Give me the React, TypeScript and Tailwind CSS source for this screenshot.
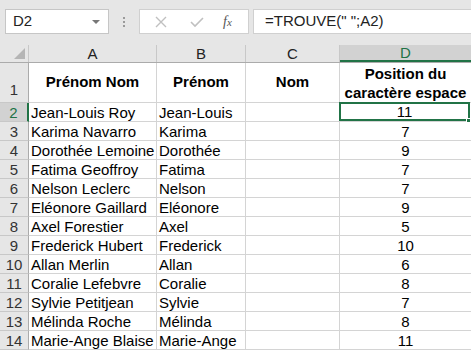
import React from 'react';

const rows: [string, string, number][] = [
  ['Jean-Louis Roy', 'Jean-Louis', 11],
  ['Karima Navarro', 'Karima', 7],
  ['Dorothée Lemoine', 'Dorothée', 9],
  ['Fatima Geoffroy', 'Fatima', 7],
  ['Nelson Leclerc', 'Nelson', 7],
  ['Eléonore Gaillard', 'Eléonore', 9],
  ['Axel Forestier', 'Axel', 5],
  ['Frederick Hubert', 'Frederick', 10],
  ['Allan Merlin', 'Allan', 6],
  ['Coralie Lefebvre', 'Coralie', 8],
  ['Sylvie Petitjean', 'Sylvie', 7],
  ['Mélinda Roche', 'Mélinda', 8],
  ['Marie-Ange Blaise', 'Marie-Ange', 11],
];

const cols = 'grid grid-cols-[29px_128px_89px_94px_131px]';
const cell = 'border-r border-b border-[#d4d4d4] h-[19px] leading-[19px] text-[15px] overflow-hidden whitespace-nowrap';

export default function App() {
  return (
    <div className="w-[471px] h-[351px] overflow-hidden bg-white text-black" style={{ fontFamily: '"Liberation Sans", Arial, sans-serif' }}>
      {/* formula bar */}
      <div className="h-[45px] bg-[#e6e6e6] flex items-start pt-[9px] pl-[5px]">
        <div className="w-[104px] h-[25px] bg-white border border-[#c6c6c6] flex items-center justify-between pl-[7px] pr-[8px]">
          <span className="text-[15px] text-[#222]">D2</span>
          <span className="w-0 h-0 border-l-[4px] border-r-[4px] border-t-[4px] border-l-transparent border-r-transparent border-t-[#777]" />
        </div>
        <div className="w-[30px] h-[25px] flex flex-col items-center justify-center gap-[2px]">
          <span className="w-[2px] h-[2px] bg-[#9a9a9a]" />
          <span className="w-[2px] h-[2px] bg-[#9a9a9a]" />
          <span className="w-[2px] h-[2px] bg-[#9a9a9a]" />
        </div>
        <div className="w-[110px] h-[25px] bg-white border border-[#d0d0d0] flex items-center">
          <svg width="12" height="12" viewBox="0 0 12 12" className="ml-[15px]">
            <path d="M1 1 L11 11 M11 1 L1 11" stroke="#c0c0c0" strokeWidth="1.4" fill="none" />
          </svg>
          <svg width="14" height="12" viewBox="0 0 14 12" className="ml-[23px]">
            <path d="M1 6 L5 10 L13 2" stroke="#c0c0c0" strokeWidth="1.6" fill="none" />
          </svg>
          <span className="ml-[19px] text-[14px] italic text-[#555]" style={{ fontFamily: '"Liberation Serif", serif' }}>f<span className="text-[11px]">x</span></span>
        </div>
        <div className="ml-[4px] flex-1 h-[25px] bg-white border border-[#d0d0d0] border-r-0 flex items-center pl-[11px]">
          <span className="text-[15px] text-[#222]">=TROUVE(" ";A2)</span>
        </div>
      </div>

      {/* column headers */}
      <div className={`${cols} h-[18px] bg-[#e6e6e6] border-b border-[#ababab] text-[15px] text-[#222]`}>
        <div className="border-r border-[#c8c8c8] relative">
          <span className="absolute right-[3px] bottom-[3px] w-0 h-0 border-l-[11px] border-t-[11px] border-l-transparent border-t-transparent border-b-0 border-r-0" style={{ borderRightWidth: 0 }} />
          <svg width="11" height="11" viewBox="0 0 11 11" className="absolute right-[3px] bottom-[3px]">
            <path d="M11 0 L11 11 L0 11 Z" fill="#b5b5b5" />
          </svg>
        </div>
        {['A', 'B', 'C'].map((c) => (
          <div key={c} className="border-r border-[#c8c8c8] flex items-center justify-center leading-none">{c}</div>
        ))}
        <div className="bg-[#d2d2d2] text-[#217346] flex items-center justify-center leading-none border-b-2 border-[#217346]">D</div>
      </div>

      {/* row 1 */}
      <div className={`${cols} h-[40px]`}>
        <div className="bg-[#e6e6e6] border-r border-[#ababab] border-b border-b-[#c8c8c8] flex items-end justify-center text-[15px] text-[#333] pb-[1px]">1</div>
        <div className="border-r border-b border-[#d4d4d4] flex items-center justify-center font-bold text-[15px]">Prénom Nom</div>
        <div className="border-r border-b border-[#d4d4d4] flex items-center justify-center font-bold text-[15px]">Prénom</div>
        <div className="border-r border-b border-[#d4d4d4] flex items-center justify-center font-bold text-[15px]">Nom</div>
        <div className="border-b border-[#d4d4d4] flex flex-col items-center justify-center font-bold text-[15px] leading-[19px] text-center">
          <span>Position du</span>
          <span>caractère espace</span>
        </div>
      </div>

      {/* data rows */}
      {rows.map(([full, first, pos], i) => {
        const sel = i === 0;
        return (
          <div key={i} className={cols}>
            <div className={`${sel ? 'bg-[#d2d2d2] text-[#217346] border-r-2 border-r-[#217346]' : 'bg-[#e6e6e6] text-[#333] border-r border-r-[#ababab]'} border-b border-b-[#c8c8c8] h-[19px] leading-[19px] text-[15px] text-center`}>{i + 2}</div>
            <div className={`${cell} pl-[2px]`}>{full}</div>
            <div className={`${cell} pl-[2px]`}>{first}</div>
            <div className={cell} />
            {sel ? (
              <div className="relative h-[19px] border-b border-[#d4d4d4]">
                <div className="absolute -top-[1px] -left-[1px] right-[1px] bottom-0 border-2 border-[#217346] flex items-center justify-center text-[15px] leading-none">{pos}</div>
                <span className="absolute right-0 -bottom-[2px] w-[5px] h-[5px] bg-[#217346] border border-white" />
              </div>
            ) : (
              <div className={`${cell} border-r-0 text-center`}>{pos}</div>
            )}
          </div>
        );
      })}
    </div>
  );
}
